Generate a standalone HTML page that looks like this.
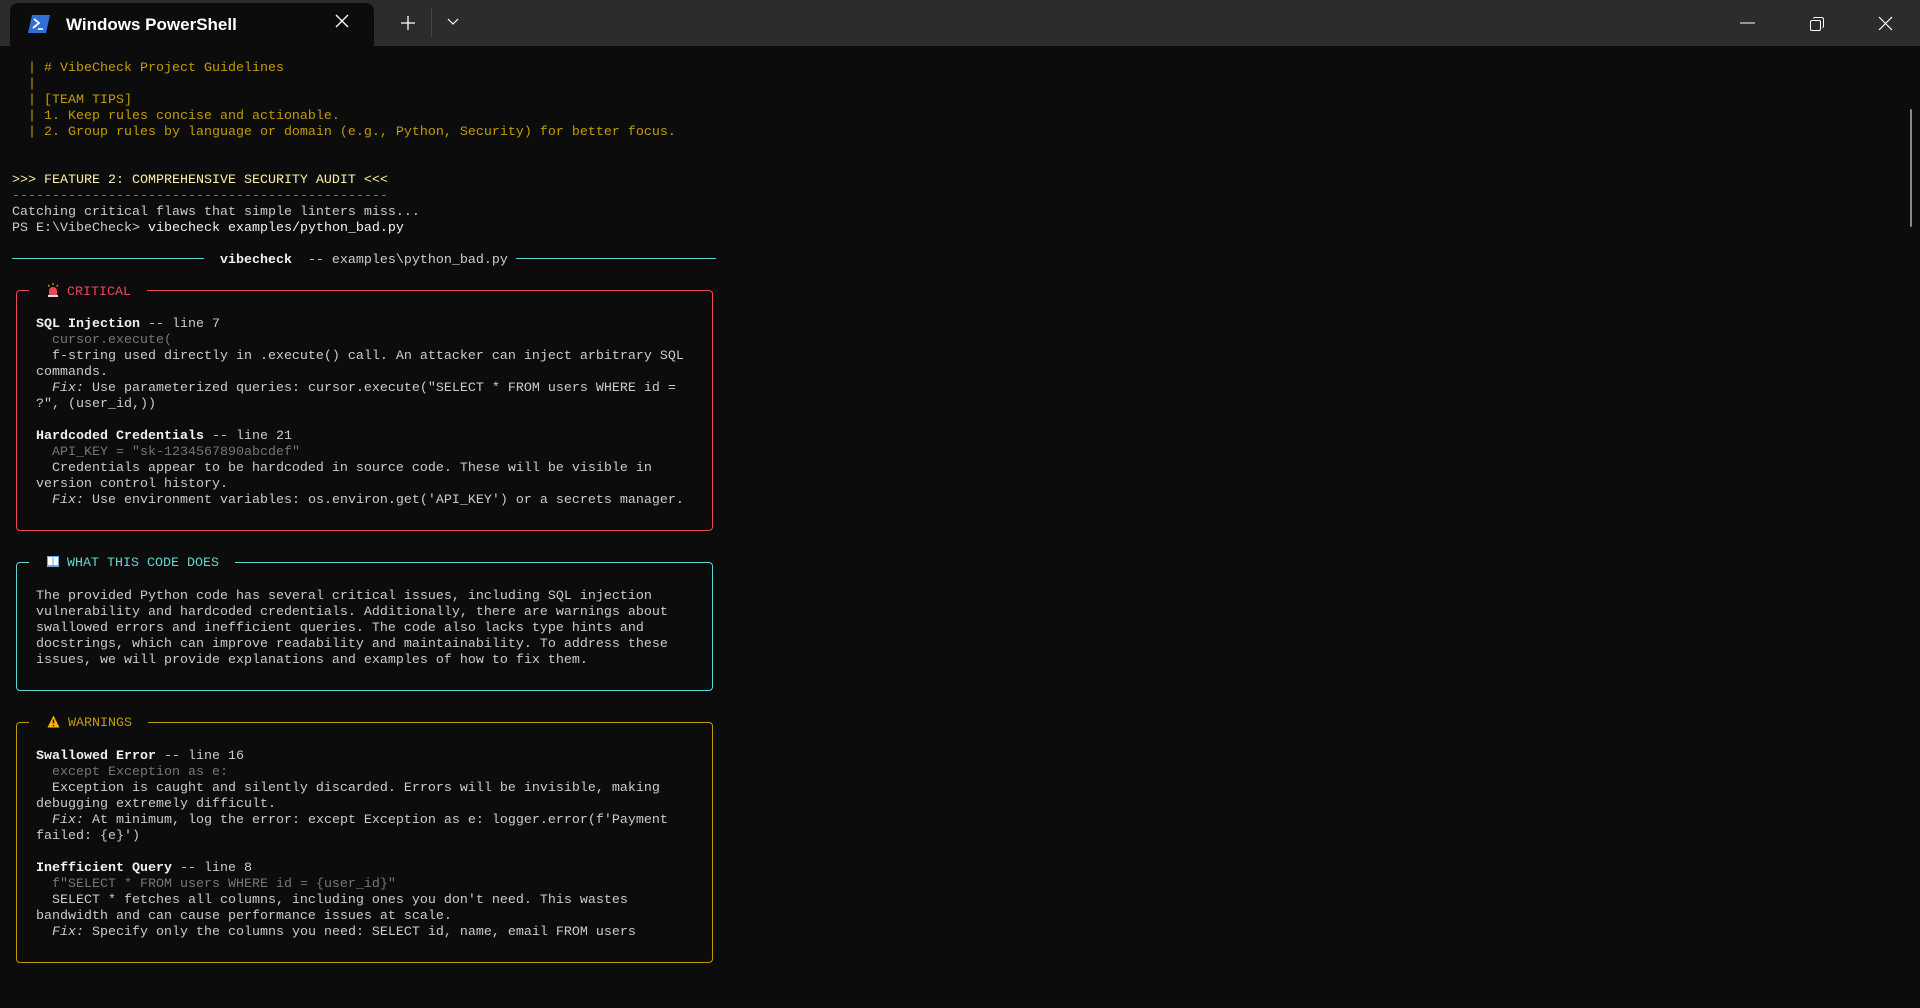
<!DOCTYPE html>
<html><head><meta charset="utf-8"><style>
html,body{margin:0;padding:0;width:1920px;height:1008px;overflow:hidden;background:#0c0c0c;}
.tb{position:absolute;left:0;top:0;width:1920px;height:46px;background:#2c2c2c;}
.tab{position:absolute;left:10px;top:3px;width:364px;height:43px;background:#0c0c0c;border-radius:8px 8px 0 0;}
.title{position:absolute;left:56px;top:12px;font:600 17px "Liberation Sans",sans-serif;color:#fff;}
pre{position:absolute;left:12px;top:61px;margin:0;font:13.33px/16px "Liberation Mono",monospace;color:#cccccc;}
.y{color:#c19c00}.by{color:#f9f1a5}.g{color:#767676}.b{color:#f2f2f2;font-weight:bold}.w{color:#f2f2f2}.i{font-style:italic}
.r{color:#e74856}.c{color:#61d6d6}
.box{position:absolute;left:16px;width:695px;border:1px solid;border-radius:4px;}
.hd{position:absolute;top:-8px;left:12px;height:16px;background:#0c0c0c;padding:0 16px 0 4px;font:13.33px/16px "Liberation Mono",monospace;}
.hd svg{vertical-align:-2px;margin-right:8px;margin-left:14px}
.rule{position:absolute;top:258px;height:1px;background:#61d6d6;}
</style></head><body>
<div class="tb">
 <div class="tab">
  <svg style="position:absolute;left:18px;top:12px" width="22" height="18" viewBox="0 0 22 18"><path d="M4 0H22L18 18H0Z" fill="#2f6fd6"/><path d="M6 4l5 4-6 5" stroke="#fff" stroke-width="1.8" fill="none"/><path d="M10 14h5" stroke="#fff" stroke-width="1.6"/></svg>
  <div class="title">Windows PowerShell</div>
  <svg style="position:absolute;left:325px;top:11px" width="14" height="14"><path d="M1 1L13 13M13 1L1 13" stroke="#fff" stroke-width="1.3"/></svg>
 </div>
 <svg style="position:absolute;left:400px;top:15px" width="16" height="16"><path d="M8 1V15M1 8H15" stroke="#fff" stroke-width="1.3"/></svg>
 <div style="position:absolute;left:431px;top:8px;width:1px;height:30px;background:#444"></div>
 <svg style="position:absolute;left:447px;top:18px" width="12" height="8"><path d="M1 1L6 6L11 1" stroke="#fff" stroke-width="1.2" fill="none"/></svg>
 <svg style="position:absolute;left:1740px;top:22px" width="16" height="2"><path d="M0 1H15" stroke="#fff" stroke-width="1"/></svg>
 <svg style="position:absolute;left:1809px;top:16px" width="16" height="16"><rect x="1.5" y="4.5" width="10" height="10" rx="1.5" stroke="#fff" fill="none"/><path d="M4.5 2.5Q4.5 1.5 6 1.5H12.5Q14.5 1.5 14.5 3.5V10Q14.5 11.5 13.5 11.5" stroke="#fff" fill="none"/></svg>
 <svg style="position:absolute;left:1878px;top:16px" width="15" height="15"><path d="M1 1L14 14M14 1L1 14" stroke="#fff" stroke-width="1.2"/></svg>
</div>
<div style="position:absolute;left:1910px;top:109px;width:2px;height:118px;background:#8a8a8a;border-radius:1px"></div>

<div class="rule" style="left:12px;width:192px"></div>
<div class="rule" style="left:516px;width:200px"></div>

<div class="box" style="top:290px;height:239px;border-color:#e74856">
 <div class="hd r"><svg width="12" height="14" viewBox="0 0 12 14"><path d="M2 13V8a4 4 0 0 1 8 0v5Z" fill="#e74856"/><rect x="1" y="12" width="10" height="2" fill="#ddd"/><path d="M6 0v2M1 2l1.5 1.5M11 2L9.5 3.5" stroke="#f9c000" stroke-width="1"/></svg>CRITICAL</div>
</div>
<div class="box" style="top:562px;height:127px;border-color:#61d6d6">
 <div class="hd c"><svg width="12" height="13" viewBox="0 0 12 13"><rect x="0" y="1" width="12" height="11" fill="#6fa8dc"/><rect x="1" y="2" width="4.5" height="8" fill="#fff"/><rect x="6.5" y="2" width="4.5" height="8" fill="#fff"/></svg>WHAT THIS CODE DOES</div>
</div>
<div class="box" style="top:722px;height:239px;border-color:#c19c00">
 <div class="hd y"><svg width="13" height="13" viewBox="0 0 13 13"><path d="M6.5 0.5L12.5 12.5H0.5Z" fill="#f7b500"/><path d="M6.5 4.5V8.5M6.5 10v1.2" stroke="#222" stroke-width="1.5"/></svg>WARNINGS</div>
</div>

<pre><span class="y">  | # VibeCheck Project Guidelines
  |
  | [TEAM TIPS]
  | 1. Keep rules concise and actionable.
  | 2. Group rules by language or domain (e.g., Python, Security) for better focus.</span>


<span class="by">&gt;&gt;&gt; FEATURE 2: COMPREHENSIVE SECURITY AUDIT &lt;&lt;&lt;</span>
<span class="g">-----------------------------------------------</span>
Catching critical flaws that simple linters miss...
PS E:\VibeCheck&gt; <span class="w">vibecheck examples/python_bad.py</span>

                          <span class="b">vibecheck</span>  -- examples\python_bad.py



   <span class="b">SQL Injection</span> -- line 7
     <span class="g">cursor.execute(</span>
     f-string used directly in .execute() call. An attacker can inject arbitrary SQL
   commands.
     <span class="i">Fix:</span> Use parameterized queries: cursor.execute("SELECT * FROM users WHERE id =
   ?", (user_id,))

   <span class="b">Hardcoded Credentials</span> -- line 21
     <span class="g">API_KEY = "sk-1234567890abcdef"</span>
     Credentials appear to be hardcoded in source code. These will be visible in
   version control history.
     <span class="i">Fix:</span> Use environment variables: os.environ.get('API_KEY') or a secrets manager.





   The provided Python code has several critical issues, including SQL injection
   vulnerability and hardcoded credentials. Additionally, there are warnings about
   swallowed errors and inefficient queries. The code also lacks type hints and
   docstrings, which can improve readability and maintainability. To address these
   issues, we will provide explanations and examples of how to fix them.





   <span class="b">Swallowed Error</span> -- line 16
     <span class="g">except Exception as e:</span>
     Exception is caught and silently discarded. Errors will be invisible, making
   debugging extremely difficult.
     <span class="i">Fix:</span> At minimum, log the error: except Exception as e: logger.error(f'Payment
   failed: {e}')

   <span class="b">Inefficient Query</span> -- line 8
     <span class="g">f"SELECT * FROM users WHERE id = {user_id}"</span>
     SELECT * fetches all columns, including ones you don't need. This wastes
   bandwidth and can cause performance issues at scale.
     <span class="i">Fix:</span> Specify only the columns you need: SELECT id, name, email FROM users
</pre>
</body></html>
